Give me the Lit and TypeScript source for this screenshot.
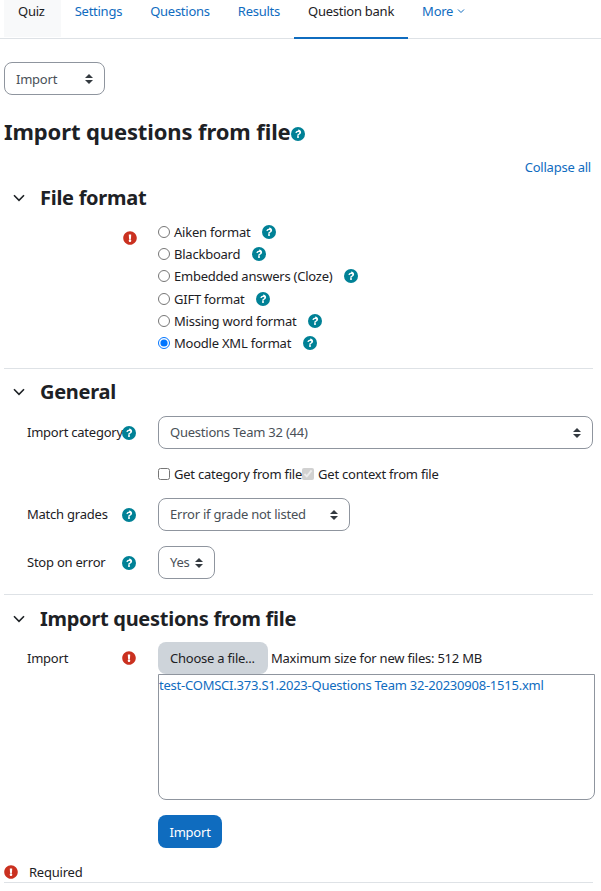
import { LitElement, css, html, svg } from 'lit'
import { customElement } from 'lit/decorators.js'

const helpMark = svg`<path d="M262.655 90c-54.497 0-89.255 22.957-132.044 76.346-5.544 6.916-4.155 16.908 3.045 22.326l27.45 20.812c7.423 5.627 18.066 4.283 23.907-3.043 25.554-32.03 44.103-52.437 78.642-52.437 26.97 0 60.327 17.355 60.327 43.53 0 19.779-16.331 29.93-42.964 44.865-31.1 17.433-72.262 39.176-72.262 93.601V316c0 13.255 10.745 24 24 24h44c13.255 0 24-10.745 24-24v-3.5c0-37.775 110.389-39.353 110.389-141.5 0-77.28-80.03-137-146.49-137zM256 352c-26.51 0-48 21.49-48 48s21.49 48 48 48 48-21.49 48-48-21.49-48-48-48z"></path>`
const errorPath = svg`<path d="M504 256c0 136.997-111.043 248-248 248S8 392.997 8 256C8 119.083 119.043 8 256 8s248 111.083 248 248zm-248 50c-25.405 0-46 20.595-46 46s20.595 46 46 46 46-20.595 46-46-20.595-46-46-46zm-43.673-165.346l7.418 136c.347 6.364 5.609 11.346 11.982 11.346h48.546c6.373 0 11.635-4.982 11.982-11.346l7.418-136c.375-6.874-5.098-12.654-11.982-12.654h-63.383c-6.884 0-12.356 5.78-11.981 12.654z"></path>`

const help = () => html`<svg class="help" viewBox="0 0 512 512"><circle cx="256" cy="256" r="256"></circle><g class="mark" transform="translate(256 256) scale(.74) translate(-256 -256)">${helpMark}</g></svg>`
const error = () => html`<svg class="error" viewBox="0 0 512 512">${errorPath}</svg>`

const formats = ['Aiken format', 'Blackboard', 'Embedded answers (Cloze)', 'GIFT format', 'Missing word format', 'Moodle XML format']

@customElement('app-root')
export class AppRoot extends LitElement {
  static styles = css`
    :host {
      display: block;
      width: 601px;
      height: 891px;
      overflow: hidden;
      background: #fff;
      color: #1d2125;
      font-family: "Noto Sans", "Open Sans", sans-serif;
      font-size: 13px;
      letter-spacing: -0.23px;
      line-height: 20px;
    }
    .tabs {
      display: flex;
      height: 38px;
      padding-left: 4px;
      border-bottom: 1px solid #dee2e6;
      color: #0f6cbf;
      letter-spacing: -0.25px;
    }
    .tab {
      padding: 1px 14px 0;
      height: 37px;
      box-sizing: border-box;
      white-space: nowrap;
    }
    .tab.current { background: #f8f9fa; color: #1d2125; padding-right: 16px; }
    .tab.active { color: #1d2125; border-bottom: 2px solid #0f6cbf; height: 39px; }
    .more { display: flex; gap: 4px; align-items: center; height: 20px; }
    .page { padding: 23px 8px 0 4px; }
    .select {
      position: relative;
      display: flex;
      align-items: center;
      box-sizing: border-box;
      height: 33px;
      padding: 0 0 1px 11px;
      border: 1px solid #8f959e;
      border-radius: 8px;
      color: #495057;
      white-space: nowrap;
    }
    .select svg { position: absolute; right: 11px; top: 11px; width: 8px; height: 10px; fill: #343a40; }
    .nav-select { width: 101px; padding-bottom: 0; }
    h2 {
      display: flex;
      align-items: center;
      margin: 20px 0 0;
      font-size: 22px;
      line-height: 32px;
      font-weight: 700;
      letter-spacing: -0.12px;
    }
    h2 .help { margin-top: 5px; }
    .collapse { margin-top: 10px; text-align: right; color: #0f6cbf; padding-right: 2px; }
    .section { border-bottom: 1px solid #dee2e6; }
    .head { display: flex; align-items: center; height: 32px; gap: 15px; padding-left: 9px; }
    .head h3 { margin: 0; font-size: 20px; line-height: 32px; font-weight: 700; letter-spacing: -0.28px; }
    .first-section { padding-top: 5px; }
    .chevron { width: 12px; height: 8px; fill: none; stroke: #1d2125; stroke-width: 1.6; }
    .help { width: 14px; height: 14px; fill: #008196; flex: none; }
    .help .mark { fill: #fff; }
    .error { width: 14px; height: 14px; fill: #ca3120; flex: none; }
    .row { display: grid; grid-template-columns: 154px 1fr; }
    .label { display: flex; align-items: center; padding-left: 23px; height: 33px; }
    .label span { width: 95px; margin-bottom: 2px; white-space: nowrap; }
    .formats { margin-top: 7px; padding-bottom: 14px; }
    .formats .label { height: 34px; padding-left: 119px; }
    .radio { display: flex; align-items: center; height: 22.2px; white-space: nowrap; }
    input { margin: 0 4px 0 0; width: 12px; height: 12px; flex: none; }
    .radio .help { margin-left: 11.5px; }
    .general { padding: 7px 0 15px; }
    .general .row { margin-top: 15px; }
    .general .row.first { margin-top: 8px; }
    .general .row.checks-row { margin-top: 0; }
    .checks { display: flex; align-items: center; height: 20px; margin: 15px 0 -1px; white-space: nowrap; }
    .upload { padding-top: 8px; height: 256px; box-sizing: border-box; border-bottom: 0; }
    .upload .row { margin-top: 7px; }
    .upload .label { height: 32px; }
    .upload .label span { margin-bottom: 0; }
    .picker { display: flex; align-items: center; }
    .choose {
      box-sizing: border-box;
      width: 110px;
      height: 32px;
      padding: 6px 12px;
      border-radius: 8px;
      background: #ced4da;
      white-space: nowrap;
    }
    .limit { margin-left: 3px; white-space: nowrap; }
    .files {
      box-sizing: border-box;
      height: 126px;
      width: 437px;
      padding: 0;
      border: 1px solid #8f959e;
      border-radius: 0 0 8px 8px;
      color: #0f6cbf;
      white-space: nowrap;
    }
    .button {
      display: inline-block;
      margin-top: 15px;
      padding: 6.5px 11.5px;
      border-radius: 8px;
      background: #0f6cbf;
      color: #fff;
    }
    .required { display: flex; align-items: center; gap: 11px; height: 20px; margin-top: 11px; }
    .rule { border-bottom: 1px solid #dee2e6; }
    .match { width: 192px; }
    .stop { width: 57px; }
  `

  private arrows() {
    return html`<svg viewBox="0 0 8 10"><path d="M4 0 8 4H0zM0 6h8L4 10z"></path></svg>`
  }

  private chevron() {
    return html`<svg class="chevron" viewBox="0 0 12 8"><path d="M1 1.2 6 6.4 11 1.2"></path></svg>`
  }

  render() {
    return html`
      <nav class="tabs">
        <div class="tab current">Quiz</div>
        <div class="tab">Settings</div>
        <div class="tab">Questions</div>
        <div class="tab">Results</div>
        <div class="tab active">Question bank</div>
        <div class="tab">
          <div class="more">More <svg width="8" height="6" viewBox="0 0 8 6" fill="none" stroke="currentColor"><path d="M1 1.5 4 4.5 7 1.5"></path></svg></div>
        </div>
      </nav>
      <main class="page">
        <div class="select nav-select">Import ${this.arrows()}</div>
        <h2>Import questions from file${help()}</h2>
        <div class="collapse">Collapse all</div>

        <section class="section first-section">
          <div class="head">${this.chevron()}<h3>File format</h3></div>
          <div class="row formats">
            <div class="label">${error()}</div>
            <div>
              ${formats.map((f, i) => html`
                <label class="radio"><input type="radio" name="format" ?checked=${i === 5} />${f}${help()}</label>
              `)}
            </div>
          </div>
        </section>

        <section class="section general">
          <div class="head">${this.chevron()}<h3>General</h3></div>
          <div class="row first">
            <div class="label"><span>Import category</span>${help()}</div>
            <div class="select">Questions Team 32 (44) ${this.arrows()}</div>
          </div>
          <div class="row checks-row">
            <div></div>
            <div class="checks">
              <input type="checkbox" /><span>Get category from file</span>
              <input type="checkbox" checked disabled /><span>Get context from file</span>
            </div>
          </div>
          <div class="row">
            <div class="label"><span>Match grades</span>${help()}</div>
            <div class="select match">Error if grade not listed ${this.arrows()}</div>
          </div>
          <div class="row">
            <div class="label"><span>Stop on error</span>${help()}</div>
            <div class="select stop">Yes ${this.arrows()}</div>
          </div>
        </section>

        <section class="section upload">
          <div class="head">${this.chevron()}<h3>Import questions from file</h3></div>
          <div class="row">
            <div class="label"><span>Import</span>${error()}</div>
            <div>
              <div class="picker"><div class="choose">Choose a file...</div><div class="limit">Maximum size for new files: 512 MB</div></div>
              <div class="files">test-COMSCI.373.S1.2023-Questions Team 32-20230908-1515.xml</div>
              <div class="button">Import</div>
            </div>
          </div>
        </section>

        <div class="required">${error()}<span>Required</span></div>
        <div class="rule"></div>
      </main>
    `
  }
}
